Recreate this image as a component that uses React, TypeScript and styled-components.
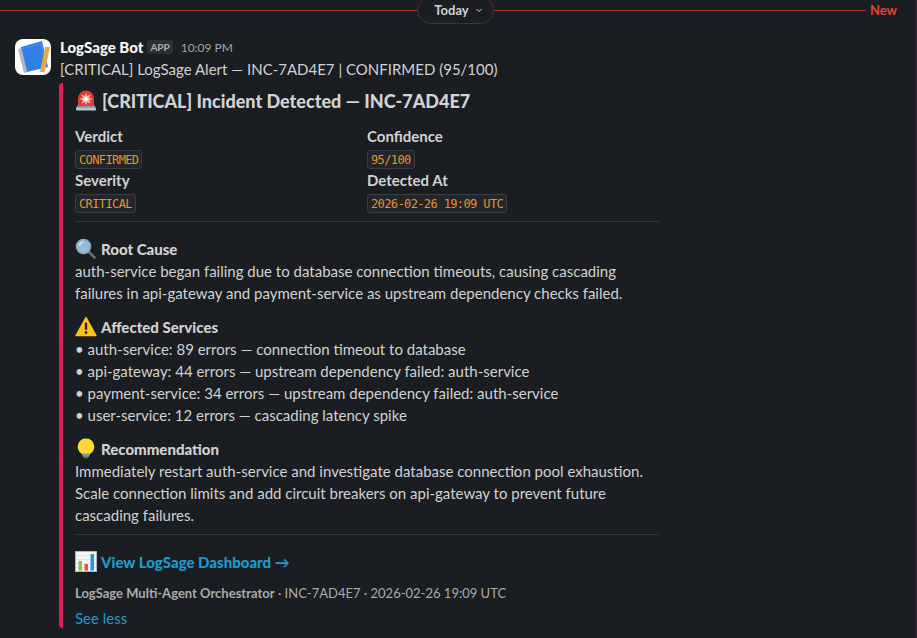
import styled, {createGlobalStyle} from 'styled-components';

const GlobalStyle = createGlobalStyle`
  html, body {
    margin: 0;
    height: 100%;
    background: #1a1d21;
    overflow: hidden;
  }
  body {
    font-family: Lato, "Noto Sans", sans-serif;
    color: #d1d2d3;
  }
`;

const Page = styled.div`
  box-sizing: border-box;
  height: 638px;
  overflow: hidden;
  background: #1a1d21;
  border-right: 1px solid #3a2440;
`;

const DateDivider = styled.div`
  display: flex;
  align-items: center;
  height: 28px;
  margin-top: -4px;
  padding-right: 19px;
`;

const DividerLine = styled.div<{$grow?: boolean}>`
  flex: ${(p) => (p.$grow ? '1' : '0 0 417px')};
  height: 1px;
  background: #a5352b;
`;

const DatePill = styled.div`
  box-sizing: border-box;
  display: flex;
  align-items: center;
  justify-content: center;
  gap: 6px;
  width: 77px;
  height: 28px;
  padding-left: 6px;
  border: 1px solid #35373b;
  border-radius: 14px;
  font-size: 13px;
  font-weight: 700;
  color: #d1d2d3;
`;

const NewLabel = styled.span`
  margin-left: 4px;
  font-size: 13px;
  font-weight: 700;
  color: #e8432e;
`;

const Message = styled.div`
  display: flex;
  gap: 9px;
  padding: 12px 0 0 15px;
`;

const Avatar = styled.svg`
  flex: none;
  width: 36px;
  height: 36px;
  margin-top: 3px;
`;

const MessageBody = styled.div`
  width: 600px;
`;

const MessageHead = styled.div`
  display: flex;
  align-items: center;
  height: 22px;
`;

const SenderName = styled.span`
  font-size: 15px;
  font-weight: 900;
  color: #f8f8f8;
`;

const AppBadge = styled.span`
  margin-left: 4px;
  padding: 0 3px;
  height: 14px;
  line-height: 14px;
  border-radius: 2px;
  background: #2c2e33;
  font-size: 10px;
  font-weight: 700;
  color: #aeafb1;
`;

const Timestamp = styled.span`
  margin-left: 8px;
  font-size: 12px;
  color: #a3a4a6;
`;

const Summary = styled.div`
  font-size: 15px;
  line-height: 22px;
  color: #d1d2d3;
`;

const Attachment = styled.div`
  margin-top: 3px;
  margin-left: -1px;
  padding-left: 12px;
  height: 545px;
  border-left: 4px solid #e01e5a;
  border-radius: 4px 0 0 4px;
`;

const Title = styled.h1`
  display: flex;
  align-items: center;
  gap: 5px;
  margin: 0;
  height: 36px;
  font-size: 18px;
  font-weight: 900;
  color: #d1d2d3;
`;

const Fields = styled.div`
  display: grid;
  grid-template-columns: 292px 292px;
  margin-top: 6px;
`;

const Field = styled.div`
  height: 44px;
`;

const FieldLabel = styled.div`
  font-size: 15px;
  line-height: 22px;
  font-weight: 700;
  color: #d1d2d3;
`;

const Code = styled.code`
  display: block;
  width: fit-content;
  box-sizing: border-box;
  height: 19px;
  margin-top: 3px;
  padding: 0 3px;
  border: 1px solid #3b3d41;
  border-radius: 3px;
  background: #222529;
  font-family: "DejaVu Sans Mono", monospace;
  font-size: 12px;
  letter-spacing: -0.62px;
  line-height: 18px;
  color: #e8912d;
`;

const Rule = styled.hr<{$before: number; $after: number}>`
  width: 584px;
  height: 1px;
  margin: ${(p) => p.$before}px 0 ${(p) => p.$after}px;
  border: 0;
  background: #35373b;
`;

const Section = styled.section`
  margin-top: 12px;
  font-size: 15px;
  line-height: 22px;
  color: #d1d2d3;
`;

const SectionHead = styled.div`
  display: flex;
  align-items: center;
  gap: 4px;
  height: 22px;
  font-weight: 900;
`;

const SectionLine = styled.div`
  white-space: nowrap;
`;

const LinkRow = styled.div`
  display: flex;
  align-items: center;
  gap: 4px;
  height: 22px;
  margin-top: 16px;
  font-size: 15px;
  font-weight: 900;
  color: #1d9bd1;
`;

const Context = styled.div`
  margin-top: 9px;
  height: 22px;
  line-height: 22px;
  font-size: 13px;
  color: #ababad;
`;

const ContextName = styled.span`
  font-weight: 700;
`;

const SeeLess = styled.div`
  margin-top: 3px;
  font-size: 15px;
  line-height: 22px;
  color: #1d9bd1;
`;

const Emoji = styled.svg`
  flex: none;
  width: 22px;
  height: 22px;
`;

const BookIcon = () => (
  <Avatar viewBox="0 0 36 36">
    <rect width="36" height="36" rx="8" fill="#fff" />
    <path d="M3 11 L6 8 L12 33 L9 34 Z" fill="#b4b8c2" />
    <path d="M6 8 L27 2 L33 28 L12 33 Z" fill="#2f7fe6" />
    <path d="M8 10 L26 4.5 L31 26" fill="none" stroke="#8fbcf5" strokeWidth="0.6" strokeDasharray="1 1" />
    <path d="M30 8 L35 8 L29.5 33 L25 33 Z" fill="#e9a93a" />
  </Avatar>
);

const SirenIcon = () => (
  <Emoji viewBox="0 0 22 22">
    <path d="M3 15.5 V8.5 a8 8 0 0 1 16 0 V15.5 Z" fill="#e5383b" />
    <path d="M11 2.5 l1.2 3.6 3.4 -1.7 -1.5 3.5 3.6 1.1 -3.6 1.2 1.5 3.5 -3.4 -1.7 -1.2 3.6 -1.2 -3.6 -3.4 1.7 1.5 -3.5 -3.6 -1.2 3.6 -1.1 -1.5 -3.5 3.4 1.7 Z" fill="#ffb9ab" />
    <circle cx="11" cy="9" r="2" fill="#fff" />
    <rect x="2" y="15.5" width="18" height="1.8" fill="#8d9aa8" />
    <rect x="1" y="17.2" width="20" height="3.3" rx="1" fill="#b9c4cf" />
  </Emoji>
);

const MagnifierIcon = () => (
  <Emoji viewBox="0 0 22 22">
    <path d="M13 13 L19.5 19.5" stroke="#6b6f75" strokeWidth="2.6" strokeLinecap="round" />
    <circle cx="8.5" cy="8.5" r="7" fill="#8fbcdc" stroke="#9aa3ab" strokeWidth="1.6" />
    <path d="M4.5 7.5 a4.5 4.5 0 0 1 4 -3.5" stroke="#d6ecf8" strokeWidth="1.4" fill="none" />
  </Emoji>
);

const WarningIcon = () => (
  <Emoji viewBox="0 0 22 22">
    <path d="M11 1.5 L21 19.5 H1 Z" fill="#fcc21b" stroke="#fcc21b" strokeWidth="1.4" strokeLinejoin="round" />
    <rect x="9.8" y="6.5" width="2.4" height="7.5" rx="1" fill="#2b2b2b" />
    <circle cx="11" cy="16.5" r="1.4" fill="#2b2b2b" />
  </Emoji>
);

const BulbIcon = () => (
  <Emoji viewBox="0 0 22 22">
    <path d="M11 0.5 a8.2 8.2 0 0 0 -4.6 15 c0.4 0.3 0.6 0.6 0.6 1 h8 c0 -0.4 0.2 -0.7 0.6 -1 A8.2 8.2 0 0 0 11 0.5 Z" fill="#fdd835" />
    <rect x="7.5" y="15.5" width="7" height="3.4" rx="0.8" fill="#7f97a3" />
    <rect x="8.8" y="18.6" width="4.4" height="1.8" rx="0.8" fill="#4f6570" />
  </Emoji>
);

const ChartIcon = () => (
  <Emoji viewBox="0 0 22 22">
    <rect x="0.5" y="0.5" width="21" height="20" fill="#f4f6f8" stroke="#aeb6bd" />
    <path d="M1 4.5h20M1 8.5h20M1 12.5h20M1 16.5h20" stroke="#d5dce2" strokeWidth="0.7" />
    <rect x="3.5" y="10" width="3.5" height="9.5" fill="#8bc34a" />
    <rect x="9.5" y="13" width="3.5" height="6.5" fill="#e8533f" />
    <rect x="15.5" y="3" width="3.5" height="16.5" fill="#2196e8" />
  </Emoji>
);

const ChevronDown = () => (
  <svg width="8" height="8" viewBox="0 0 8 8">
    <path d="M1.5 3 L4 5.5 L6.5 3" fill="none" stroke="#d1d2d3" strokeWidth="1" />
  </svg>
);

const fields = [
  {label: 'Verdict', value: 'CONFIRMED'},
  {label: 'Confidence', value: '95/100'},
  {label: 'Severity', value: 'CRITICAL'},
  {label: 'Detected At', value: '2026-02-26 19:09 UTC'},
];

const App = () => (
  <Page>
    <GlobalStyle />
    <DateDivider>
      <DividerLine />
      <DatePill>
        Today
        <ChevronDown />
      </DatePill>
      <DividerLine $grow />
      <NewLabel>New</NewLabel>
    </DateDivider>
    <Message>
      <BookIcon />
      <MessageBody>
        <MessageHead>
          <SenderName>LogSage Bot</SenderName>
          <AppBadge>APP</AppBadge>
          <Timestamp>10:09 PM</Timestamp>
        </MessageHead>
        <Summary>[CRITICAL] LogSage Alert — INC-7AD4E7 | CONFIRMED (95/100)</Summary>
        <Attachment>
          <Title>
            <SirenIcon />
            [CRITICAL] Incident Detected — INC-7AD4E7
          </Title>
          <Fields>
            {fields.map((field) => (
              <Field key={field.label}>
                <FieldLabel>{field.label}</FieldLabel>
                <Code>{field.value}</Code>
              </Field>
            ))}
          </Fields>
          <Rule $before={8} $after={16} />
          <Section>
            <SectionHead>
              <MagnifierIcon />
              Root Cause
            </SectionHead>
            <SectionLine>auth-service began failing due to database connection timeouts, causing cascading</SectionLine>
            <SectionLine>failures in api-gateway and payment-service as upstream dependency checks failed.</SectionLine>
          </Section>
          <Section>
            <SectionHead>
              <WarningIcon />
              Affected Services
            </SectionHead>
            <SectionLine>• auth-service: 89 errors — connection timeout to database</SectionLine>
            <SectionLine>• api-gateway: 44 errors — upstream dependency failed: auth-service</SectionLine>
            <SectionLine>• payment-service: 34 errors — upstream dependency failed: auth-service</SectionLine>
            <SectionLine>• user-service: 12 errors — cascading latency spike</SectionLine>
          </Section>
          <Section>
            <SectionHead>
              <BulbIcon />
              Recommendation
            </SectionHead>
            <SectionLine>Immediately restart auth-service and investigate database connection pool exhaustion.</SectionLine>
            <SectionLine>Scale connection limits and add circuit breakers on api-gateway to prevent future</SectionLine>
            <SectionLine>cascading failures.</SectionLine>
          </Section>
          <Rule $before={8} $after={0} />
          <LinkRow>
            <ChartIcon />
            View LogSage Dashboard →
          </LinkRow>
          <Context>
            <ContextName>LogSage Multi-Agent Orchestrator</ContextName> · INC-7AD4E7 · 2026-02-26 19:09 UTC
          </Context>
          <SeeLess>See less</SeeLess>
        </Attachment>
      </MessageBody>
    </Message>
  </Page>
);

export default App;
